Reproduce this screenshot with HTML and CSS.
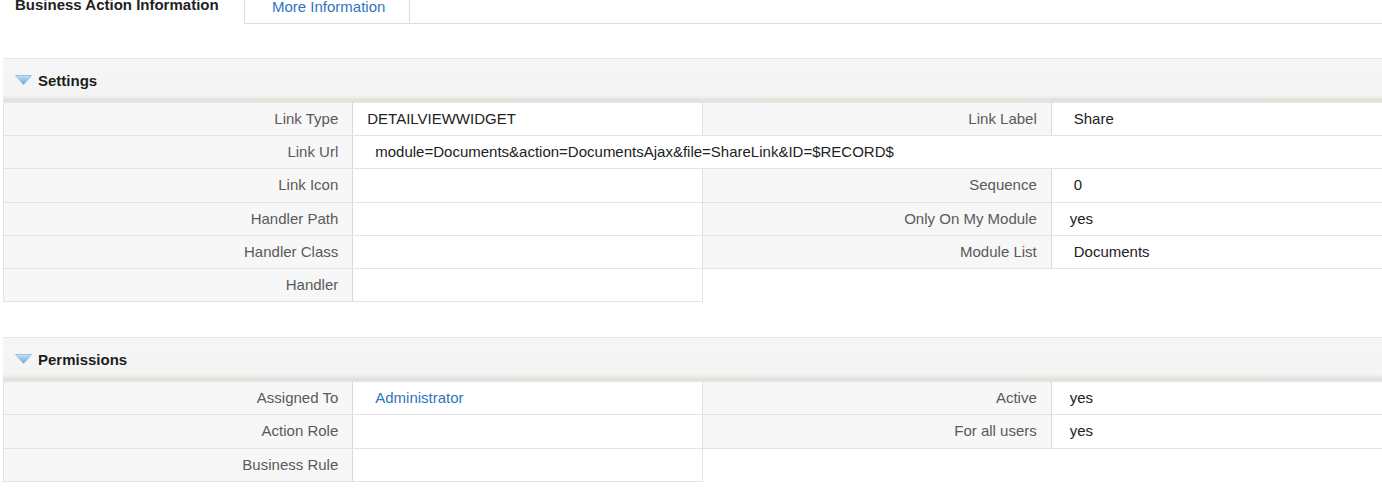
FILE: index.html
```html
<!DOCTYPE html>
<html>
<head>
<meta charset="utf-8">
<link rel="stylesheet" href="styles.css">
</head>
<body>
<div class="page">
  <div class="tabs">
    <span class="tab tab-active">Business Action Information</span>
    <a class="tab tab-link" href="#">More Information</a>
    <span class="tab-fill"></span>
  </div>

  <section class="panel panel-first">
    <div class="panel-head">
      <svg class="caret" width="17" height="10" viewBox="0 0 17 10">
        <defs>
          <linearGradient id="cg1" x1="0" y1="0" x2="0" y2="1">
            <stop offset="0" stop-color="#c4e2fa"/>
            <stop offset="1" stop-color="#6aa6de"/>
          </linearGradient>
        </defs>
        <polygon points="0.5,0.5 16.5,0.5 8.5,9.5" fill="url(#cg1)" stroke="#86b8e6" stroke-width="0.8" stroke-linejoin="round"/>
      </svg>
      <span class="panel-title">Settings</span>
    </div>
    <table class="grid">
      <colgroup><col class="c"><col class="c"><col class="c"><col class="c"></colgroup>
      <tr>
        <td class="lbl">Link Type</td>
        <td class="val">DETAILVIEWWIDGET</td>
        <td class="lbl">Link Label</td>
        <td class="val val-in">Share</td>
      </tr>
      <tr>
        <td class="lbl">Link Url</td>
        <td class="val val-in" colspan="3">module=Documents&amp;action=DocumentsAjax&amp;file=ShareLink&amp;ID=$RECORD$</td>
      </tr>
      <tr>
        <td class="lbl">Link Icon</td>
        <td class="val"></td>
        <td class="lbl">Sequence</td>
        <td class="val val-in">0</td>
      </tr>
      <tr>
        <td class="lbl">Handler Path</td>
        <td class="val"></td>
        <td class="lbl">Only On My Module</td>
        <td class="val val-yes">yes</td>
      </tr>
      <tr>
        <td class="lbl">Handler Class</td>
        <td class="val"></td>
        <td class="lbl">Module List</td>
        <td class="val val-in">Documents</td>
      </tr>
      <tr>
        <td class="lbl">Handler</td>
        <td class="val"></td>
      </tr>
    </table>
  </section>

  <section class="panel panel-second">
    <div class="panel-head">
      <svg class="caret" width="17" height="10" viewBox="0 0 17 10">
        <defs>
          <linearGradient id="cg2" x1="0" y1="0" x2="0" y2="1">
            <stop offset="0" stop-color="#c4e2fa"/>
            <stop offset="1" stop-color="#6aa6de"/>
          </linearGradient>
        </defs>
        <polygon points="0.5,0.5 16.5,0.5 8.5,9.5" fill="url(#cg2)" stroke="#86b8e6" stroke-width="0.8" stroke-linejoin="round"/>
      </svg>
      <span class="panel-title">Permissions</span>
    </div>
    <table class="grid">
      <colgroup><col class="c"><col class="c"><col class="c"><col class="c"></colgroup>
      <tr>
        <td class="lbl">Assigned To</td>
        <td class="val val-in"><a class="link" href="#">Administrator</a></td>
        <td class="lbl">Active</td>
        <td class="val val-yes">yes</td>
      </tr>
      <tr>
        <td class="lbl">Action Role</td>
        <td class="val"></td>
        <td class="lbl">For all users</td>
        <td class="val val-yes">yes</td>
      </tr>
      <tr>
        <td class="lbl">Business Rule</td>
        <td class="val"></td>
      </tr>
    </table>
  </section>
</div>
</body>
</html>
```

FILE: styles.css
```css
html, body {
  margin: 0;
  padding: 0;
  overflow: hidden;
  background: #ffffff;
}

body {
  font-family: "Liberation Sans", Arial, sans-serif;
  font-size: 15px;
  line-height: 20px;
  color: #222222;
}

.page {
  width: 1398px;
  margin-left: 3px;
}

/* Tabs */
.tabs {
  display: flex;
  align-items: flex-end;
  margin-top: -15px;
  margin-left: -3px;
}

.tab {
  display: block;
  white-space: nowrap;
  flex: none;
}

.tab-active {
  font-weight: bold;
  color: #222222;
  padding: 10px 26px 9px 15px;
  width: 203px;
}

.tab-link {
  color: #2f75bd;
  text-decoration: none;
  padding: 7px 25px 6px 27px;
  border-left: 1px solid #dddddd;
  border-right: 1px solid #dddddd;
  border-bottom: 1px solid #dddddd;
  width: 112px;
}

.tab-fill {
  flex: 1;
  border-bottom: 1px solid #dddddd;
  height: 0;
}

/* Panels */
.panel-first {
  margin-top: 34px;
}

.panel-second {
  margin-top: 35px;
}

.panel-head {
  display: flex;
  align-items: center;
  height: 43px;
  padding-left: 12px;
  border-top: 1px solid #e6e6e6;
  background: linear-gradient(to bottom,
    #f6f6f6 0%,
    #f4f4f4 84%,
    #ebebe6 90%,
    #dfded8 97%,
    #e9e9e6 100%);
}

.caret {
  display: block;
  flex: none;
  margin-right: 6px;
  margin-top: -2px;
}

.panel-title {
  font-weight: bold;
  color: #1e1e1e;
}

/* Grid table */
.grid {
  width: 1398px;
  table-layout: fixed;
  border-collapse: collapse;
}

.grid .c {
  width: 25%;
}

.grid td {
  height: 32.2px;
  padding: 0;
  border: 1px solid #e3e3e3;
  vertical-align: middle;
  white-space: nowrap;
  overflow: hidden;
}

.lbl {
  background: #f7f7f7;
  color: #5a5a5a;
  text-align: right;
  padding-right: 14px !important;
  border-right-color: #dadada !important;
}

.val {
  background: #ffffff;
  color: #222222;
  padding-left: 14px !important;
}

.val-in {
  padding-left: 22px !important;
}

.val-yes {
  padding-left: 18px !important;
}

.link {
  color: #2f75bd;
  text-decoration: none;
}
```
